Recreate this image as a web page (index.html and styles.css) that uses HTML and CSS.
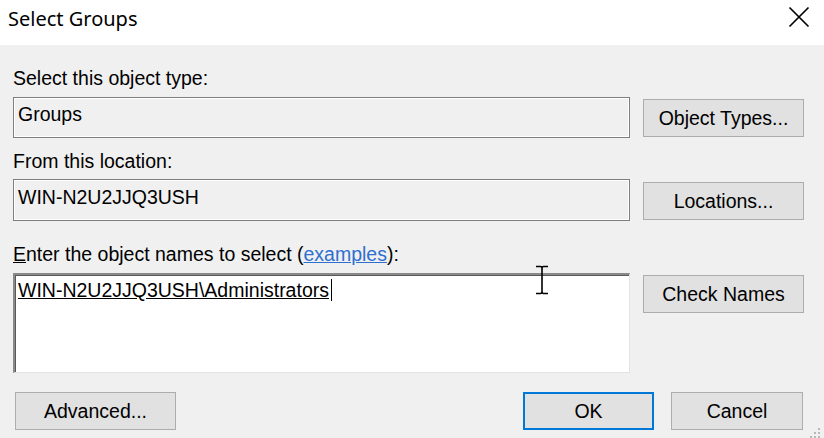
FILE: index.html
```html
<!DOCTYPE html>
<html>
<head>
<meta charset="utf-8">
<title>Select Groups</title>
<link rel="stylesheet" href="styles.css">
</head>
<body>
<div class="dialog">
  <div class="titlebar">
    <span class="title">Select Groups</span>
    <svg class="close" width="22" height="22" viewBox="0 0 22 22"><path d="M1.5 1.5 L20.5 20.5 M20.5 1.5 L1.5 20.5" stroke="#000" stroke-width="1.7" fill="none"/></svg>
  </div>
  <div class="content">
    <div class="label l1">Select this object type:</div>
    <div class="field f1">Groups</div>
    <button class="btn side b1">Object Types...</button>

    <div class="label l2">From this location:</div>
    <div class="field f2">WIN-N2U2JJQ3USH</div>
    <button class="btn side b2">Locations...</button>

    <div class="label l3"><u>E</u>nter the object names to select (<a class="link">examples</a>):</div>
    <div class="names"><span class="resolved">WIN-N2U2JJQ3USH\Administrators</span></div>
    <button class="btn side b3">Check Names</button>

    <div class="footer">
      <button class="btn adv">Advanced...</button>
      <button class="btn ok">OK</button>
      <button class="btn cancel">Cancel</button>
    </div>
  </div>
  <svg class="ibeam" width="14" height="30" viewBox="0 0 14 30"><path d="M1 1.5 H5.5 M8.5 1.5 H13 M5.5 1.5 Q7 1.5 7 3.5 V26.5 Q7 28.5 5.5 28.5 H1 M8.5 28.5 H13 M8.5 1.5 Q7 1.5 7 3.5 M7 26.5 Q7 28.5 8.5 28.5" stroke="#000" stroke-width="1.6" fill="none"/></svg>
  <svg class="grip" width="12" height="10" viewBox="0 0 12 10"><rect x="8" y="0" width="2" height="2" fill="#b8b8b8"/><rect x="8" y="4" width="2" height="2" fill="#b8b8b8"/><rect x="4" y="4" width="2" height="2" fill="#b8b8b8"/><rect x="8" y="8" width="2" height="2" fill="#b8b8b8"/><rect x="4" y="8" width="2" height="2" fill="#b8b8b8"/><rect x="0" y="8" width="2" height="2" fill="#b8b8b8"/></svg>
</div>
</body>
</html>
```
FILE: styles.css
```css
html, body {
  margin: 0;
  padding: 0;
}
body {
  width: 824px;
  height: 438px;
  overflow: hidden;
  background: #f0f0f0;
  font-family: "Liberation Sans", Arial, sans-serif;
  font-size: 19.5px;
  color: #000;
}
.dialog {
  position: relative;
  width: 824px;
  height: 438px;
}
.titlebar {
  height: 45px;
  background: #fff;
  display: flex;
  align-items: center;
  justify-content: space-between;
  padding: 0 14px 0 8px;
  box-sizing: border-box;
}
.title {
  font-family: "Noto Sans", "Open Sans", sans-serif;
  font-size: 20px;
  line-height: 24px;
  margin-top: -7px;
  color: #000;
}
.close {
  display: block;
  margin-top: -12px;
}
.content {
  display: grid;
  grid-template-columns: 617px 161px;
  column-gap: 13px;
  padding: 22px 0 0 13px;
}
.label {
  grid-column: 1;
  height: 22px;
  line-height: 22px;
  white-space: nowrap;
}
.l1 { margin-bottom: 8px; }
.l2 { margin-bottom: 7px; }
.l3 { margin-bottom: 8px; }
.link {
  color: #2f6fd0;
  text-decoration: underline;
}
.field {
  grid-column: 1;
  box-sizing: border-box;
  border: 1px solid #7f7f7f;
  box-shadow: inset 0 0 0 1px #fff;
  background: #f0f0f0;
  padding: 5px 4px 0;
  line-height: 22px;
}
.f1 { height: 41px; margin-bottom: 12px; }
.f2 { height: 42px; margin-bottom: 22px; padding-top: 6px; }
.names {
  grid-column: 1;
  height: 100px;
  box-sizing: border-box;
  background: #fff;
  border-top: 2px solid #8a8a8a;
  border-left: 2px solid #8a8a8a;
  border-right: 1px solid #e3e3e3;
  border-bottom: 1px solid #e3e3e3;
  box-shadow: inset 1px 1px 0 #5a5a5a;
  padding: 4px 3px 0;
  line-height: 22px;
  margin-bottom: 19px;
}
.resolved {
  text-decoration: underline;
  border-right: 1.5px solid #000;
  padding-right: 2px;
}
.btn {
  font-family: "Liberation Sans", Arial, sans-serif;
  font-size: 19.5px;
  color: #000;
  background: #e1e1e1;
  border: 1px solid #adadad;
  height: 38px;
  padding: 0;
  margin: 0;
  box-sizing: border-box;
  line-height: 20px;
}
.side {
  grid-column: 2;
  width: 161px;
  align-self: start;
}
.b1 { grid-row: 2; margin-top: 2px; }
.b2 { grid-row: 4; margin-top: 3px; }
.b3 { grid-row: 6; margin-top: 2px; }
.footer {
  grid-column: 1 / span 2;
  display: flex;
  align-items: center;
}
.adv {
  width: 161px;
  margin-left: 2px;
}
.ok {
  width: 131px;
  margin-left: auto;
  border: 2px solid #0078d7;
}
.cancel {
  width: 132px;
  margin-left: 17px;
  margin-right: 1px;
}
.ibeam {
  position: absolute;
  left: 535px;
  top: 265px;
}
.grip {
  position: absolute;
  right: 2px;
  bottom: 0;
}
```
